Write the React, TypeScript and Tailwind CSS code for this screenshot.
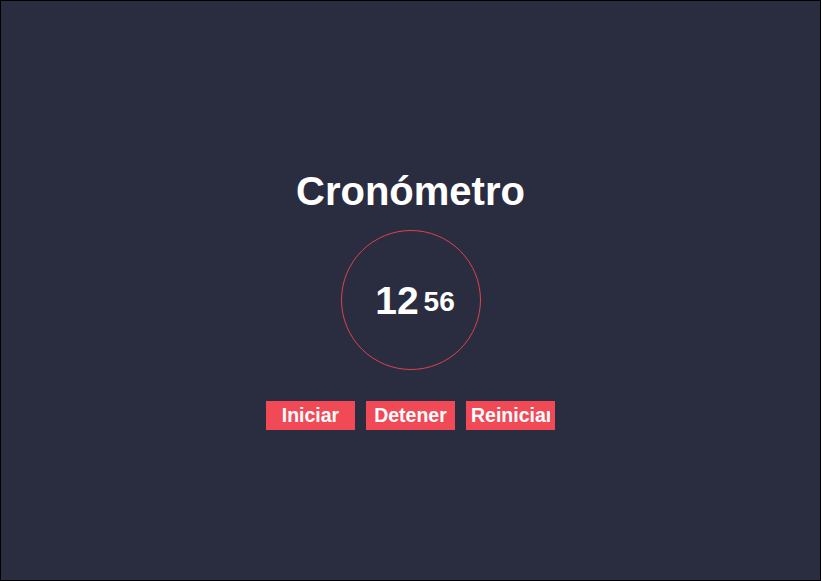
import { useState, useEffect, useRef } from "react";

const App = () => {
  const [tenths, setTenths] = useState(1256);
  const [running, setRunning] = useState(false);
  const timer = useRef<number | null>(null);

  // tick while running
  useEffect(() => {
    if (!running) return;
    timer.current = window.setInterval(() => setTenths((t) => t + 1), 10);
    return () => {
      if (timer.current) window.clearInterval(timer.current);
    };
  }, [running]);

  const seconds = Math.floor(tenths / 100);
  const hundredths = String(tenths % 100).padStart(2, "0");

  const btn =
    "w-[89px] h-[29px] bg-[#f24957] text-[19.5px] font-bold px-[5px] whitespace-nowrap";

  return (
    <div className="w-[822px] h-[581px] bg-white">
      <div
        className="w-[821px] h-[581px] bg-[#2a2c40] border border-black flex flex-col items-center pt-[167px] text-white"
        style={{ fontFamily: '"Liberation Sans", Arial, sans-serif' }}
      >
        <h1 className="text-[40px] leading-[46px] font-bold">Cronómetro</h1>

        <div className="mt-[16px] w-[140px] h-[140px] rounded-full border border-[#e0424f] flex items-center justify-center pl-[9px] gap-[5px] font-bold">
          <span className="text-[39px] leading-[46px] mt-[2px]">{seconds}</span>
          <span className="text-[28px] leading-[32px] mt-[3px]">{hundredths}</span>
        </div>

        <div className="mt-[31px] flex gap-[11px]">
          <button onClick={() => setRunning(true)} className={btn}>
            <div className="overflow-hidden text-center">Iniciar</div>
          </button>
          <button onClick={() => setRunning(false)} className={btn}>
            <div className="overflow-hidden text-center">Detener</div>
          </button>
          <button
            onClick={() => {
              setRunning(false);
              setTenths(0);
            }}
            className={btn}
          >
            <div className="overflow-hidden text-left">Reiniciar</div>
          </button>
        </div>
      </div>
    </div>
  );
};

export default App;
